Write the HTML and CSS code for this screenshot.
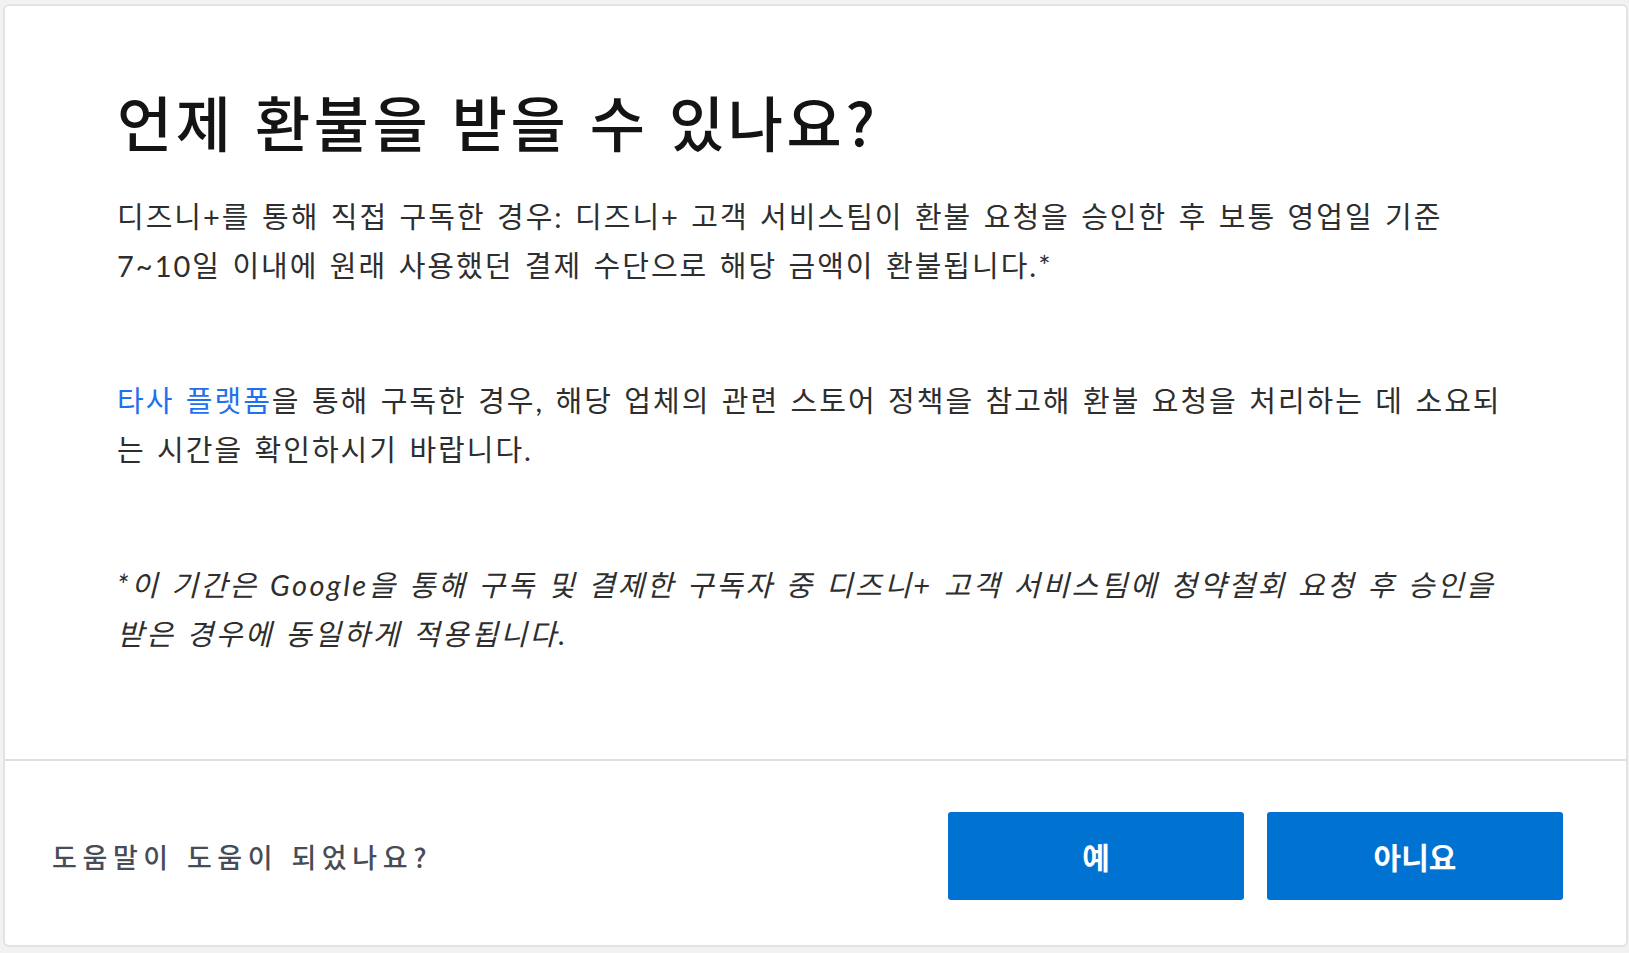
FILE: index.html
```html
<!DOCTYPE html>
<html lang="ko">
<head>
<meta charset="utf-8">
<title>언제 환불을 받을 수 있나요?</title>
<link rel="stylesheet" href="styles.css">
</head>
<body>
<div class="card">
  <article class="article">
    <h1 class="title">언제 환불을 받을 수 있나요?</h1>
    <p class="para">디즈니+를 통해 직접 구독한 경우: 디즈니+ 고객 서비스팀이 환불 요청을 승인한 후 보통 영업일 기준 7~10일 이내에 원래 사용했던 결제 수단으로 해당 금액이 환불됩니다.*</p>
    <p class="para"><a class="link" href="#">타사 플랫폼</a>을 통해 구독한 경우, 해당 업체의 관련 스토어 정책을 참고해 환불 요청을 처리하는 데 소요되는 시간을 확인하시기 바랍니다.</p>
    <p class="para italic">*이 기간은 Google을 통해 구독 및 결제한 구독자 중 디즈니+ 고객 서비스팀에 청약철회 요청 후 승인을 받은 경우에 동일하게 적용됩니다.</p>
  </article>
  <footer class="feedback">
    <span class="question">도움말이 도움이 되었나요?</span>
    <div class="buttons">
      <button class="btn">예</button>
      <button class="btn">아니요</button>
    </div>
  </footer>
</div>
</body>
</html>
```

FILE: styles.css
```css
html, body {
  margin: 0;
  padding: 0;
}
body {
  background: #f2f2f3;
  padding: 4px 1px 2px 3px;
  font-family: "Lato", "Noto Sans CJK KR", sans-serif;
  color: #2b2b2b;
  overflow: hidden;
}
.card {
  background: #fff;
  border: 2px solid #e2e3e5;
  border-radius: 6px;
  height: 943px;
  display: flex;
  flex-direction: column;
  box-sizing: border-box;
}
.article {
  padding: 80px 108px 15px 112px;
  border-bottom: 2px solid #dcdfe3;
}
.title {
  margin: 0 0 36px;
  font-family: "Noto Sans CJK KR", sans-serif;
  font-size: 60px;
  line-height: 70px;
  font-weight: 500;
  letter-spacing: 3.6px;
  color: #141414;
}
.para {
  margin: 0 0 86px;
  font-family: "Lato", "Noto Sans CJK KR", sans-serif;
  font-size: 29px;
  line-height: 49px;
  letter-spacing: 2px;
  word-spacing: 2px;
  color: #2e2e2e;
}
.italic {
  font-style: italic;
  letter-spacing: 2.45px;
}
.link {
  color: #1f6ff0;
  text-decoration: none;
}
.feedback {
  flex: 1;
  display: flex;
  align-items: center;
  justify-content: space-between;
  padding: 6px 63px 0 47px;
}
.question {
  font-family: "Noto Sans CJK KR", sans-serif;
  font-size: 27px;
  font-weight: 500;
  color: #474d58;
  letter-spacing: 5.6px;
}
.buttons {
  display: flex;
  gap: 23px;
}
.btn {
  width: 296px;
  height: 88px;
  border: none;
  border-radius: 3px;
  background: #0072d2;
  color: #fff;
  font-family: "Noto Sans CJK KR", sans-serif;
  font-size: 30px;
  font-weight: 700;
  cursor: pointer;
}
```
